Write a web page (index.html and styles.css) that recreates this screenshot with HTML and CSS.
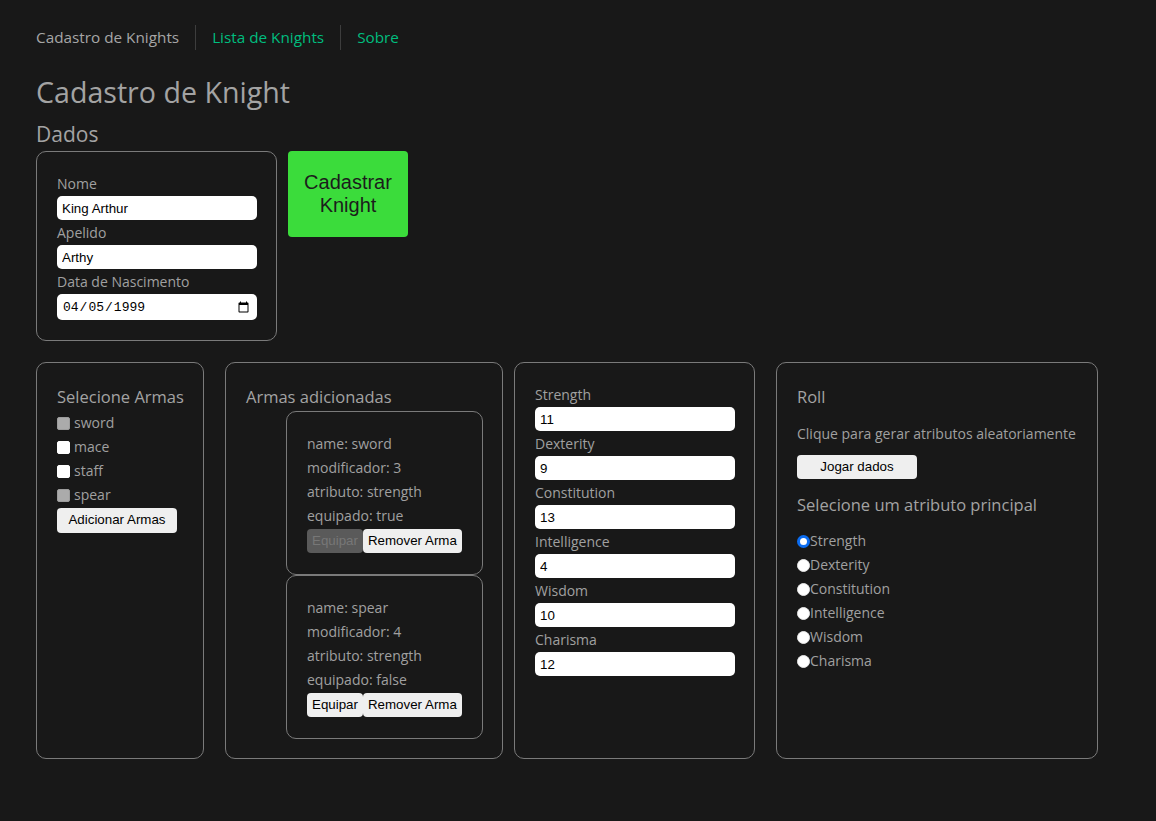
FILE: index.html
```html
<!DOCTYPE html>
<html lang="pt-BR">
<head>
<meta charset="utf-8">
<title>Cadastro de Knight</title>
<link rel="stylesheet" href="styles.css">
</head>
<body>
<div class="app">
  <nav class="nav">
    <a class="nav-link nav-current" href="#">Cadastro de Knights</a>
    <a class="nav-link" href="#">Lista de Knights</a>
    <a class="nav-link" href="#">Sobre</a>
  </nav>
  <main>
    <h1 class="title">Cadastro de Knight</h1>
    <h2 class="subtitle">Dados</h2>
    <div class="row-top">
      <form class="panel panel-dados">
        <label class="field-label">Nome</label>
        <input class="text-input" type="text" value="King Arthur">
        <label class="field-label">Apelido</label>
        <input class="text-input" type="text" value="Arthy">
        <label class="field-label">Data de Nascimento</label>
        <input class="text-input date-input" type="date" value="1999-04-05">
      </form>
      <button class="btn-submit">Cadastrar Knight</button>
    </div>

    <div class="row-bottom">
      <section class="panel panel-armas">
        <h3 class="panel-title">Selecione Armas</h3>
        <label class="check-row"><input class="checkbox" type="checkbox" disabled>sword</label>
        <label class="check-row"><input class="checkbox" type="checkbox">mace</label>
        <label class="check-row"><input class="checkbox" type="checkbox">staff</label>
        <label class="check-row"><input class="checkbox" type="checkbox" disabled>spear</label>
        <button class="btn btn-wide">Adicionar Armas</button>
      </section>

      <section class="panel panel-lista">
        <h3 class="panel-title">Armas adicionadas</h3>
        <ul class="weapon-list">
          <li class="weapon-card">
            <p class="weapon-line">name: sword</p>
            <p class="weapon-line">modificador: 3</p>
            <p class="weapon-line">atributo: strength</p>
            <p class="weapon-line">equipado: true</p>
            <div class="weapon-actions"><button class="btn" disabled>Equipar</button><button class="btn">Remover Arma</button></div>
          </li>
          <li class="weapon-card">
            <p class="weapon-line">name: spear</p>
            <p class="weapon-line">modificador: 4</p>
            <p class="weapon-line">atributo: strength</p>
            <p class="weapon-line">equipado: false</p>
            <div class="weapon-actions"><button class="btn">Equipar</button><button class="btn">Remover Arma</button></div>
          </li>
        </ul>
      </section>

      <section class="panel panel-attr">
        <label class="field-label">Strength</label>
        <input class="text-input" type="text" value="11">
        <label class="field-label">Dexterity</label>
        <input class="text-input" type="text" value="9">
        <label class="field-label">Constitution</label>
        <input class="text-input" type="text" value="13">
        <label class="field-label">Intelligence</label>
        <input class="text-input" type="text" value="4">
        <label class="field-label">Wisdom</label>
        <input class="text-input" type="text" value="10">
        <label class="field-label">Charisma</label>
        <input class="text-input" type="text" value="12">
      </section>

      <section class="panel panel-roll">
        <h3 class="panel-title">Roll</h3>
        <p class="roll-text">Clique para gerar atributos aleatoriamente</p>
        <button class="btn btn-wide btn-roll">Jogar dados</button>
        <h3 class="panel-title roll-sub">Selecione um atributo principal</h3>
        <div class="radio-group">
          <label class="radio-row"><input class="radio" type="radio" name="attr" checked>Strength</label>
          <label class="radio-row"><input class="radio" type="radio" name="attr">Dexterity</label>
          <label class="radio-row"><input class="radio" type="radio" name="attr">Constitution</label>
          <label class="radio-row"><input class="radio" type="radio" name="attr">Intelligence</label>
          <label class="radio-row"><input class="radio" type="radio" name="attr">Wisdom</label>
          <label class="radio-row"><input class="radio" type="radio" name="attr">Charisma</label>
        </div>
      </section>
    </div>
  </main>
</div>
</body>
</html>
```

FILE: styles.css
```css
html, body {
  margin: 0;
  background: #181818;
}

body {
  color: #a0a0a0;
  font-family: "Open Sans", "Noto Sans", sans-serif;
  font-size: 14px;
  line-height: 24px;
}

.app {
  padding: 0 36px;
}

.nav {
  display: flex;
  padding-top: 25px;
}

.nav-link {
  font-size: 15.3px;
  line-height: 25px;
  padding: 0 16px;
  border-left: 1px solid #3d3d3d;
  color: #00bd7e;
  text-decoration: none;
}

.nav-link:first-child {
  border-left: 0;
  padding-left: 0;
}

.nav-current {
  color: #a6a6a6;
}

.title {
  font-size: 28.6px;
  font-weight: 400;
  line-height: 36px;
  margin: 24px 0 0;
  color: #a3a3a3;
}

.subtitle {
  font-size: 21px;
  font-weight: 400;
  line-height: 28px;
  margin: 10px 0 3px;
  color: #a3a3a3;
}

.row-top {
  display: flex;
  align-items: flex-start;
}

.panel {
  box-sizing: border-box;
  border: 1px solid #7a7a7a;
  border-radius: 10px;
  padding: 19px 20px 20px;
}

.panel-dados {
  width: 241px;
  display: flex;
  flex-direction: column;
  margin: 0;
}

.field-label {
  line-height: 24px;
  padding-top: 1px;
}

.text-input {
  box-sizing: border-box;
  width: 200px;
  height: 24px;
  border: 0;
  border-radius: 5px;
  padding: 0 5px;
  margin: 0;
  background: #fff;
  color: #000;
  font-family: "Liberation Sans", Arial, sans-serif;
  font-size: 13.33px;
  outline: none;
  color-scheme: light;
}

.date-input {
  height: 26px;
  font-family: "Liberation Mono", monospace;
  font-size: 13px;
}

.btn-submit {
  margin-left: 11px;
  width: 120px;
  height: 86px;
  background: #3bdc3b;
  border: 0;
  border-radius: 4px;
  font-family: "Liberation Sans", Arial, sans-serif;
  font-size: 20px;
  line-height: 23px;
  color: #1c1c1c;
  padding: 0 8px;
}

.row-bottom {
  display: flex;
  margin-top: 21px;
  height: 397px;
}

.panel-armas {
  width: 168px;
}

.panel-lista {
  width: 278px;
  margin-left: 21px;
}

.panel-attr {
  width: 241px;
  margin-left: 11px;
  display: flex;
  flex-direction: column;
}

.panel-roll {
  width: 322px;
  margin-left: 21px;
}

.panel-title {
  margin: 0;
  padding-top: 1px;
  font-size: 16.5px;
  font-weight: 400;
  line-height: 28px;
  color: #a3a3a3;
  white-space: nowrap;
}

.check-row {
  display: flex;
  align-items: center;
  height: 24px;
}

.checkbox {
  appearance: none;
  -webkit-appearance: none;
  box-sizing: border-box;
  width: 13px;
  height: 13px;
  margin: 0 4px 0 0;
  border: 1px solid #fff;
  border-radius: 2px;
  background: #fff;
}

.checkbox:disabled {
  background: #ababab;
  border-color: #9c9c9c;
}

.btn {
  box-sizing: border-box;
  flex: none;
  height: 24px;
  padding: 0 5px;
  margin: 0;
  border: 0;
  border-radius: 4px;
  background: #efefef;
  color: #000;
  font-family: "Liberation Sans", Arial, sans-serif;
  font-size: 13.33px;
  line-height: 24px;
  white-space: nowrap;
}

.btn:disabled {
  background: #5a5a5a;
  color: #777;
}

.btn-wide {
  width: 120px;
  height: 25px;
}

.weapon-list {
  list-style: none;
  margin: 0;
  padding: 0 0 0 40px;
}

.weapon-card {
  box-sizing: border-box;
  width: 197px;
  border: 1px solid #7a7a7a;
  border-radius: 10px;
  padding: 20px 20px 21px;
}

.weapon-line {
  margin: 0;
  line-height: 24px;
}

.weapon-actions {
  display: flex;
  margin-top: 1px;
}

.roll-text {
  margin: 11px 0 0;
  line-height: 24px;
}

.btn-roll {
  margin-top: 9px;
  height: 24px;
}

.roll-sub {
  margin-top: 11px;
}

.radio-group {
  margin-top: 10px;
}

.radio-row {
  display: flex;
  align-items: center;
  height: 24px;
}

.radio {
  appearance: none;
  -webkit-appearance: none;
  box-sizing: border-box;
  width: 13px;
  height: 13px;
  margin: 0;
  border-radius: 50%;
  background: #fff;
  border: 1px solid #e6e6e6;
}

.radio:checked {
  border: 3px solid #0b6cf0;
  background: #fff;
}
```
